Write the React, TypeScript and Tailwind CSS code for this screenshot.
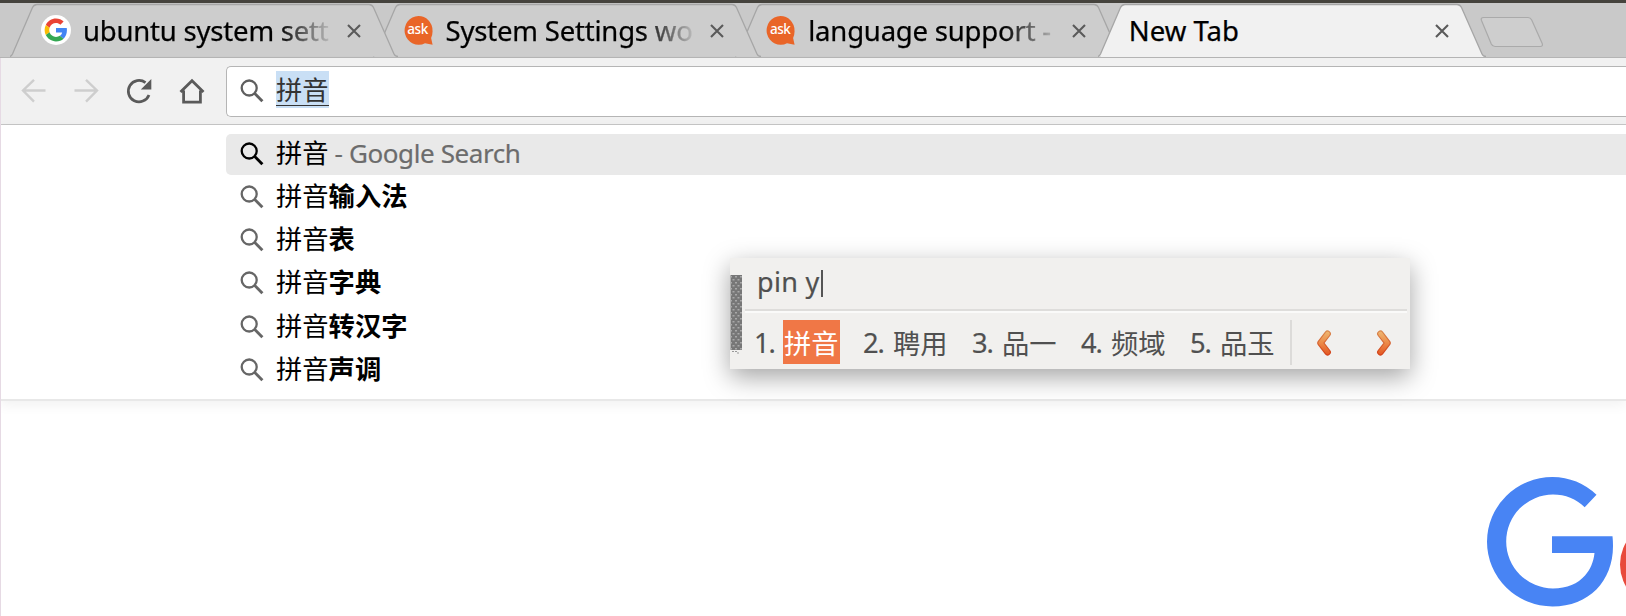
import React from "react";

function GoogleIcon() {
  return (
    <svg width="30" height="30" viewBox="0 0 30 30" className="shrink-0">
      <circle cx="15" cy="15" r="15" fill="#fff" />
      <g transform="translate(3.6 3.6) scale(.475)">
        <path fill="#EA4335" d="M24 9.5c3.54 0 6.71 1.22 9.21 3.6l6.85-6.85C35.9 2.38 30.47 0 24 0 14.62 0 6.51 5.38 2.56 13.22l7.98 6.19C12.43 13.72 17.74 9.5 24 9.5z" />
        <path fill="#4285F4" d="M46.98 24.55c0-1.57-.15-3.09-.38-4.55H24v9.02h12.94c-.58 2.96-2.26 5.48-4.78 7.18l7.73 6c4.51-4.18 7.09-10.36 7.09-17.65z" />
        <path fill="#FBBC05" d="M10.53 28.59c-.48-1.45-.76-2.99-.76-4.59s.27-3.14.76-4.59l-7.98-6.19C.92 16.46 0 20.12 0 24s.92 7.54 2.56 10.78l7.97-6.19z" />
        <path fill="#34A853" d="M24 48c6.48 0 11.93-2.13 15.89-5.81l-7.73-6c-2.15 1.45-4.92 2.3-8.16 2.3-6.26 0-11.57-4.22-13.47-9.91l-7.98 6.19C6.51 42.62 14.62 48 24 48z" />
      </g>
    </svg>
  );
}

function AskIcon() {
  return (
    <span className="relative flex h-[30px] w-[30px] shrink-0 items-center justify-center">
      <svg width="30" height="30" viewBox="0 0 30 30" className="absolute inset-0">
        <path d="M14.500 1a14 14.400 0 1 0 6.500 27.200l7.600 1.600-1.500-6.900a14.600 14.600 0 0 0 1.400-7.500A14 14.400 0 0 0 14.500 1z" fill="#e96528" />
      </svg>
      <span className="relative -left-px text-[13.500px] font-medium leading-none tracking-[-0.4px] text-white">ask</span>
    </span>
  );
}

function CloseIcon() {
  return (
    <svg width="14" height="14" viewBox="0 0 14 14" className="mt-px shrink-0">
      <path d="M1 1l12 12M13 1L1 13" stroke="#5a5a5a" strokeWidth="2.1" fill="none" />
    </svg>
  );
}

function TabShape({ active }: { active?: boolean }) {
  return (
    <svg width="388" height="54" viewBox="0 0 388 54" className="absolute inset-0">
      <path
        d="M0 53.5 Q1.500 53 2.500 51 L22.500 4.500 Q24 1.500 27 1.500 H359 Q362 1.500 363.500 4.500 L384 51 Q385 53.500 388 53.500 Z"
        fill={active ? "#f1f1f1" : "#cdcdcd"}
      />
      <path
        d="M0 53.5 Q1.500 53 2.500 51 L22.500 4.500 Q24 1.500 27 1.500 H359 Q362 1.500 363.500 4.500 L384 51 Q385 53.500 388 53.500"
        fill="none"
        stroke="#a6a6a6"
        strokeWidth="1.3"
      />
    </svg>
  );
}

function Tab({ icon, title, z, active }: { icon?: React.ReactNode; title: string; z: string; active?: boolean }) {
  return (
    <div className={`relative -mr-[25.4px] h-[54px] w-[388px] shrink-0 ${z}`}>
      <TabShape active={active} />
      <div className="relative flex h-full items-center pl-[31px] pr-[37px]">
        {icon}
        <span
          className={`min-w-0 flex-1 whitespace-nowrap pt-[2px] text-[27.500px] leading-[50px] text-black [-webkit-text-stroke:0.25px_#000] ${
            active ? "tracking-[0px]" : "ml-[12px] mr-[10px] tracking-[-0.2px] [mask-image:linear-gradient(to_right,#000_195px,transparent_252px)]"
          }`}
        >
          {title}
        </span>
        <CloseIcon />
      </div>
    </div>
  );
}

function SearchIcon({ color }: { color: string }) {
  return (
    <svg width="24" height="24" viewBox="0 0 24 24" className="-mt-px shrink-0">
      <circle cx="9.200" cy="9" r="7.500" fill="none" stroke={color} strokeWidth="2.300" />
      <path d="M14.500 14.300l7.900 7.900" stroke={color} strokeWidth="2.900" />
    </svg>
  );
}

function NavIcons() {
  return (
    <>
      <svg width="26" height="26" viewBox="0 0 26 26" className="ml-[21px]" fill="none" stroke="#cecece" strokeWidth="2.400">
        <path d="M24.500 12.500H2.500M13 1.800L2 12.500l11 11.200" />
      </svg>
      <svg width="26" height="26" viewBox="0 0 26 26" className="ml-[27px]" fill="none" stroke="#cecece" strokeWidth="2.400">
        <path d="M.5 12.500h22M12 1.800L23 12.500 12 23.700" />
      </svg>
      <svg width="28" height="28" viewBox="0 0 28 28" className="ml-[25px]">
        <path d="M20.500 5.600A10.700 10.700 0 1 0 24 18" fill="none" stroke="#5a5a5a" strokeWidth="2.700" />
        <path d="M26.300 2v10.500H15.800z" fill="#5a5a5a" />
      </svg>
      <svg width="26" height="26" viewBox="0 0 26 26" className="ml-[26px]" fill="none" stroke="#5a5a5a" strokeWidth="2.800">
        <path d="M1.500 14L13 2.700 24.500 14M4.600 12.500v11.700h16.800V12.500" />
      </svg>
    </>
  );
}

const suggestions = ["输入法", "表", "字典", "转汉字", "声调"];

const candidates = [
  { n: "1.", word: "拼音", selected: true },
  { n: "2.", word: "聘用" },
  { n: "3.", word: "品一" },
  { n: "4.", word: "频域" },
  { n: "5.", word: "品玉" },
];

function Chevron({ right }: { right?: boolean }) {
  return (
    <svg width="16" height="26" viewBox="0 0 16 26" className={right ? "-scale-x-100" : ""}>
      <defs>
        <linearGradient id="ember" x1="0" y1="0" x2="0" y2="26" gradientUnits="userSpaceOnUse">
          <stop offset="0" stopColor="#eebc76" />
          <stop offset=".5" stopColor="#ec8a48" />
          <stop offset="1" stopColor="#e2521f" />
        </linearGradient>
        <linearGradient id="emberEdge" x1="0" y1="0" x2="0" y2="26" gradientUnits="userSpaceOnUse">
          <stop offset="0" stopColor="#d9894e" />
          <stop offset="1" stopColor="#d23c14" />
        </linearGradient>
      </defs>
      <path d="M11.600 3.800L4.500 13l7.100 9.200" fill="none" stroke="url(#emberEdge)" strokeWidth="6.600" strokeLinecap="round" strokeLinejoin="round" />
      <path d="M11.600 3.800L4.500 13l7.100 9.200" fill="none" stroke="url(#ember)" strokeWidth="4.400" strokeLinecap="round" strokeLinejoin="round" />
    </svg>
  );
}

function InputPanel() {
  return (
    <div className="absolute left-[730px] top-[258px] flex h-[111px] w-[680px] bg-[#f1f0ee] text-[#505050] shadow-[0_8px_24px_0px_rgba(0,0,0,0.36)]">
      <svg width="12" height="79" className="mt-[17px] shrink-0">
        <defs>
          <pattern id="grip" width="5" height="6" patternUnits="userSpaceOnUse">
            <path d="M0 1h2v1.500H0zM2.500 4h2v1.500h-2z" fill="#a8a8a8" />
          </pattern>
        </defs>
        <rect x=".5" width="11.500" height="75" fill="#777" />
        <rect x=".5" width="11.500" height="75" fill="url(#grip)" />
        <path d="M2 76h2v1H2zM5 76h2v1H5zM7 77.500h2v1H7z" fill="#999" />
      </svg>
      <div className="flex min-w-0 flex-1 flex-col pl-[3px] pr-[3px]">
        <div className="flex h-[53px] items-center border-b-2 border-[#dedddb] pl-[12px] text-[27px] tracking-[0.3px] [-webkit-text-stroke:0.2px_#505050]">
          <span className="relative -top-px whitespace-pre">pin y</span>
          <span className="ml-px h-[27px] w-[2px] bg-[#555]" />
        </div>
        <div className="h-[2px] bg-[#fafaf9]" />
        <div className="flex flex-1 items-start pt-[7px]">
          {candidates.map((c) => (
            <div key={c.n} className="flex h-[44px] w-[109px] shrink-0 items-center pl-[8px] text-[27.300px]">
              <span className="w-[30px] shrink-0 pl-px pt-[2px] tracking-[-1px] [-webkit-text-stroke:0.2px_#505050]">{c.n}</span>
              <span className={c.selected ? "flex h-[44px] w-[57px] items-center bg-[#f07746] pl-px pt-[4px] text-white" : "flex h-[44px] w-[57px] items-center pl-px pt-[4px]"}>
                {c.word}
              </span>
            </div>
          ))}
          <div className="h-[45px] w-[2px] bg-[#dcdbd9]" />
          <div className="ml-[24px] mt-[10px] flex gap-[44px]">
            <Chevron />
            <Chevron right />
          </div>
        </div>
      </div>
    </div>
  );
}

export default function App() {
  return (
    <div className="relative flex h-[616px] w-[1626px] flex-col overflow-hidden bg-white font-['Noto_Sans','Noto_Sans_CJK_SC',sans-serif]">
      <div className="h-[3px] shrink-0 bg-[#45433d]" />
      <header className="flex h-[55px] shrink-0 overflow-hidden border-b border-[#b4b4b4] bg-[#c9c9c9] pl-[10px]">
        <Tab z="z-30" icon={<GoogleIcon />} title="ubuntu system sett" />
        <Tab z="z-20" icon={<AskIcon />} title="System Settings wo" />
        <Tab z="z-10" icon={<AskIcon />} title="language support -" />
        <div className="relative z-40 -mb-px h-[55px]">
          <Tab z="z-40" title="New Tab" active />
          <div className="relative z-50 -mt-px ml-[3px] h-[2px] w-[382px] bg-[#f1f1f1]" />
        </div>
        <svg width="64" height="32" viewBox="0 0 64 32" className="-ml-[3px] mt-[13px] shrink-0">
          <path d="M3.500 1.500H48q2.500 0 3.700 2.500l10.500 23.500q1 3-2 3H15q-2.500 0-3.700-2.500L1.500 4.500q-1-3 2-3z" fill="#cecece" stroke="#aaa" strokeWidth="1.200" />
        </svg>
      </header>

      <div className="flex h-[67px] shrink-0 items-center border-b border-[#c6c6c6] bg-[#f1f1f1]">
        <NavIcons />
        <div className="ml-[21px] flex h-[51px] flex-1 items-center rounded-l-[5px] border border-r-0 border-[#b5b5b5] bg-white pl-[13px]">
          <SearchIcon color="#5f5f5f" />
          <span className="-mt-[3px] ml-[12px] flex h-[37px] items-center bg-[#c9dff5] text-[26.300px] leading-none text-[#333]">
            <span className="border-b-[1.5px] border-[#333] pt-[2px] leading-[30px]">拼音</span>
          </span>
        </div>
      </div>

      <section className="flex h-[276px] shrink-0 flex-col border-b-2 border-[#e8e8e8] pl-[226px] pt-[9px] text-[26.300px] text-black shadow-[0_4px_12px_rgba(0,0,0,0.06)]">
        <div className="flex h-[41px] shrink-0 items-center rounded-l-[5px] bg-[#e9e9e9] pl-[14px] leading-[39px]">
          <SearchIcon color="#000" />
          <span className="-mt-[2px] ml-[12px]">拼音</span>
          <span className="-mt-[2px] ml-[6px] whitespace-pre text-[26px] tracking-[-0.4px] text-[#6c6c6c] [-webkit-text-stroke:0.2px_#6c6c6c]">- Google Search</span>
        </div>
        <ul className="mt-px flex flex-col">
          {suggestions.map((s) => (
            <li key={s} className="flex h-[43.200px] items-center pl-[14px] leading-[41px]">
              <SearchIcon color="#666" />
              <span className="-mt-[2px] ml-[12px]">
                拼音<b className="font-bold">{s}</b>
              </span>
            </li>
          ))}
        </ul>
      </section>

      <main className="flex flex-1 items-end justify-end">
        <svg width="146" height="146" viewBox="1480 470 146 146">
          <path
            d="M1596.500 494.700A65.500 64.800 0 0 0 1552.500 477A65.500 64.800 0 0 0 1487 541.800A65.500 64.800 0 0 0 1552.500 606.500C1589 606.500 1613 581 1613 546Q1613 541 1612.500 536.300H1552V553H1594.500C1593.500 562.500 1590 570 1585 575.500C1578 583.500 1567 588.500 1553 588.500A47 47 0 0 1 1506.200 541.500A47 47 0 0 1 1553 494.500C1565.500 494.500 1576 499 1584.700 507.200Z"
            fill="#4884f4"
          />
          <circle cx="1663" cy="564.500" r="43" fill="#e84a3c" />
        </svg>
      </main>

      <div className="absolute bottom-0 left-0 top-[58px] w-px bg-[#e6dae4]" />
      <InputPanel />
    </div>
  );
}
